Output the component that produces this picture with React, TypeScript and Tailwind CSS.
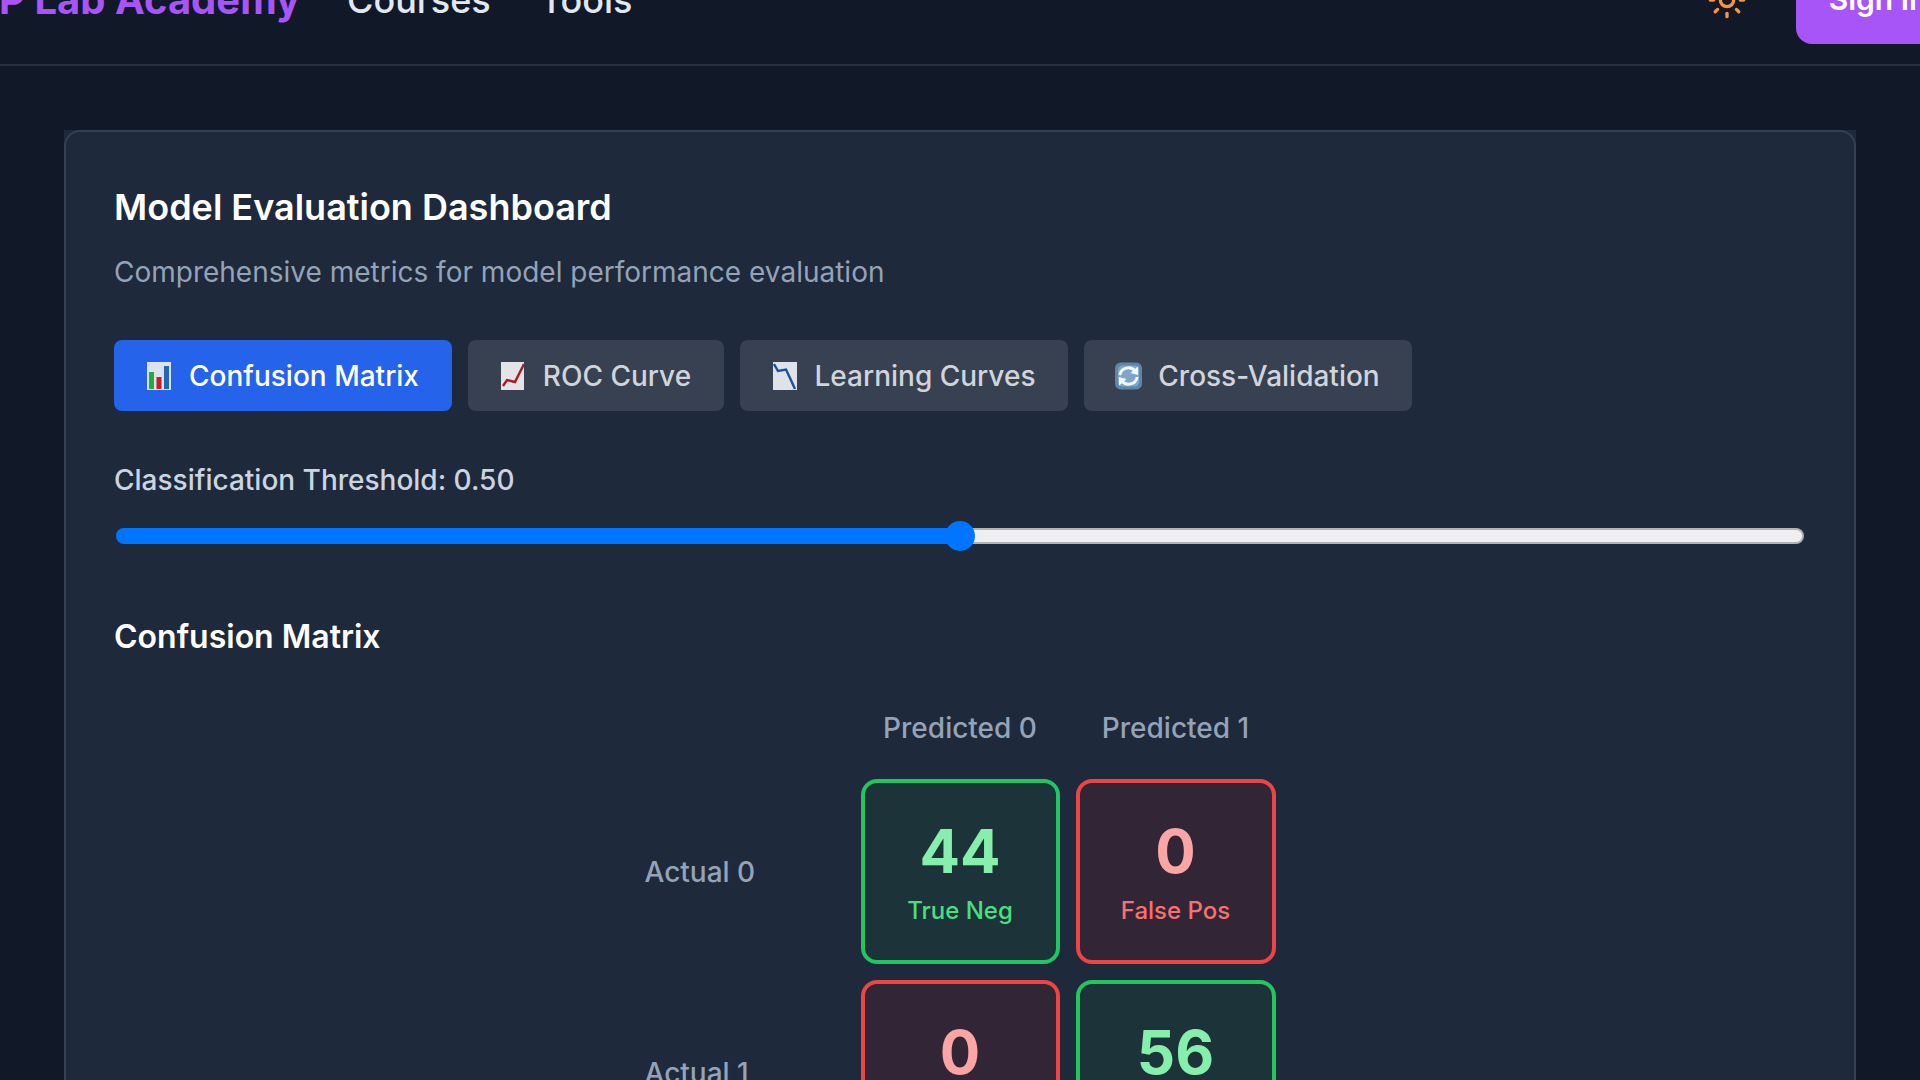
import { Sun } from "lucide-react";

const BarIcon = () => (
  <svg width="24" height="28" viewBox="0 0 24 28">
    <rect width="24" height="28" fill="#dbe4ee" />
    <rect x="2" y="10" width="5" height="17" fill="#22ad3a" />
    <rect x="9.5" y="15" width="5" height="12" fill="#c81e1e" />
    <rect x="17" y="4" width="5" height="23" fill="#1f6ab8" />
  </svg>
);

const UpIcon = () => (
  <svg width="23" height="28" viewBox="0 0 23 28">
    <rect width="23" height="28" fill="#e3e4e6" />
    <path d="M2 24 L6 18 L14 20 L18 12 L23 2" fill="none" stroke="#b3161f" strokeWidth="2.4" />
  </svg>
);

const DownIcon = () => (
  <svg width="24" height="28" viewBox="0 0 24 28">
    <rect width="24" height="28" fill="#dfe3e8" />
    <path d="M1 2 L5 9 L13 7.5 L17 16 L22 27" fill="none" stroke="#1c4ea3" strokeWidth="2.4" />
  </svg>
);

const SyncIcon = () => (
  <svg width="27" height="28" viewBox="0 0 28 28">
    <rect width="28" height="28" rx="6" fill="#5c87ad" />
    <rect x="3" y="3" width="22" height="22" rx="5" fill="#7fa6c8" />
    <path d="M5 13 A9 9 0 0 1 21 9" fill="none" stroke="#f4f7fa" strokeWidth="3" />
    <path d="M24 4 L24 13 L16 11 Z" fill="#f4f7fa" />
    <path d="M23 15 A9 9 0 0 1 7 19" fill="none" stroke="#f4f7fa" strokeWidth="3" />
    <path d="M4 24 L4 15 L12 17 Z" fill="#f4f7fa" />
  </svg>
);

const tabs = [
  { label: "Confusion Matrix", icon: BarIcon, width: "w-[338px]", active: true },
  { label: "ROC Curve", icon: UpIcon, width: "w-[256px]", active: false },
  { label: "Learning Curves", icon: DownIcon, width: "w-[328px]", active: false },
  { label: "Cross-Validation", icon: SyncIcon, width: "w-[328px]", active: false },
];

const Cell = ({ value, label, good }: { value: number; label: string; good: boolean }) => (
  <div
    className={`h-[185px] pb-[5px] rounded-2xl border-4 flex flex-col items-center justify-center ${
      good ? "border-[#22c55e] bg-[#1c3339]" : "border-[#ef4444] bg-[#322536]"
    }`}
  >
    <div className={`text-[60px] leading-[84px] font-bold ${good ? "text-[#86efac]" : "text-[#fca5a5]"}`}>{value}</div>
    <div className={`text-2xl leading-9 ${good ? "text-[#4ade80]" : "text-[#f87171]"}`}>{label}</div>
  </div>
);

export default function App() {
  return (
    <div className="h-screen overflow-hidden bg-[#111827] font-['Inter',sans-serif]">
      <header className="-mt-[65px] -mr-[40px] h-[131px] border-b-2 border-[#283040] flex items-center">
        <div className="-ml-[54px] text-[40px] font-bold text-[#a855f7] whitespace-nowrap">NLP Lab Academy</div>
        <nav className="ml-[47px] flex gap-[49px] text-[36px] font-medium text-[#e2e8f0]">
          <a>Courses</a>
          <a>Tools</a>
        </nav>
        <div className="ml-auto flex items-center gap-[49px]">
          <Sun size={40} className="text-[#fb923c]" />
          <button className="h-[88px] w-[164px] rounded-2xl bg-[#a855f7] text-[30px] font-semibold text-white whitespace-nowrap">
            Sign In
          </button>
        </div>
      </header>

      <main className="pt-[64px] pl-[64px] pr-[64px]">
        <div className="bg-[#1e293b]">
          <div className="rounded-2xl border-2 border-[#334155] px-12 pt-[51px] pb-12 h-[1100px]">
            <h2 className="text-[36px] leading-[48px] font-semibold text-white">Model Evaluation Dashboard</h2>
            <p className="mt-[20px] text-[28px] leading-[42px] text-[#94a3b8]">
              Comprehensive metrics for model performance evaluation
            </p>

            <div className="mt-[47px] flex gap-4">
              {tabs.map((tab) => (
                <button
                  key={tab.label}
                  className={`${tab.width} h-[71px] pr-[3px] rounded-lg flex items-center justify-center gap-[15px] text-[28px] font-medium ${
                    tab.active ? "bg-[#2563eb] text-white" : "bg-[#374151] text-[#d1d5db]"
                  }`}
                >
                  <span className="w-[30px] flex justify-center">
                    <tab.icon />
                  </span>
                  {tab.label}
                </button>
              ))}
            </div>

            <div className="mt-[50px] text-[28px] leading-[38px] font-medium text-[#cbd5e1]">
              Classification Threshold: 0.50
            </div>
            <div className="mt-[29px] mx-[2px] relative h-4 flex">
              <div className="w-1/2 rounded-l-full bg-[#0075ff]" />
              <div className="w-1/2 rounded-r-full bg-[#efefef] border-y-2 border-r-2 border-[#b2b2b2]" />
              <div className="absolute left-1/2 top-1/2 -translate-x-1/2 -translate-y-1/2 size-[30px] rounded-full bg-[#0075ff]" />
            </div>

            <h3 className="mt-[70px] text-[32px] leading-[46px] font-semibold text-white">Confusion Matrix</h3>

            <div className="mt-[48px] mx-auto w-[631px] grid grid-cols-[200px_199px_200px] gap-4 text-[#94a3b8] text-[28px] font-medium items-center">
              <div />
              <div className="text-center leading-[40px]">Predicted 0</div>
              <div className="text-center leading-[40px]">Predicted 1</div>
              <div className="mt-[15px] col-start-1">Actual 0</div>
              <div className="mt-[15px]"><Cell value={44} label="True Neg" good /></div>
              <div className="mt-[15px]"><Cell value={0} label="False Pos" good={false} /></div>
              <div>Actual 1</div>
              <Cell value={0} label="False Neg" good={false} />
              <Cell value={56} label="True Pos" good />
            </div>
          </div>
        </div>
      </main>
    </div>
  );
}
